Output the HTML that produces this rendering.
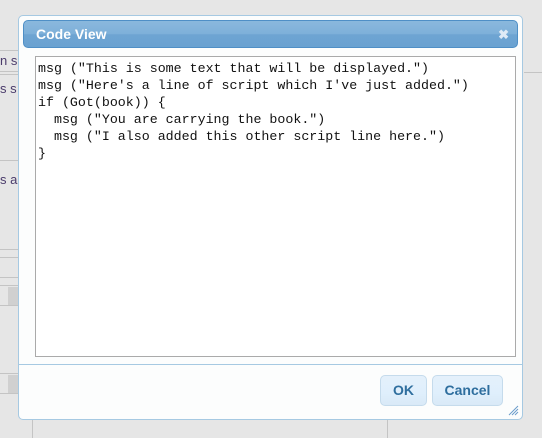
<!DOCTYPE html>
<html><head><meta charset="utf-8"><style>
html,body{margin:0;padding:0;width:542px;height:438px;overflow:hidden;background:#e6e6e6;font-family:"Liberation Sans",sans-serif;position:relative}
.l{position:absolute;background:#c4c4c4}
.t{position:absolute;font-size:13px;color:#4a3b6b;left:0}
#dlg{position:absolute;left:18px;top:15px;width:505px;height:405px;background:#fcfdfd;border:1px solid #a6c9e2;border-radius:5px;box-sizing:border-box}
#tb{position:absolute;left:4px;top:4px;width:495px;height:28px;border-radius:5px;border:1px solid #4f8fc6;box-sizing:border-box;background:linear-gradient(#8ab8dd,#7eb0d9 50%,#6ea4d2 52%,#6aa2d1)}
#tb span{position:absolute;left:12px;top:5px;color:#fff;font-weight:bold;font-size:14px}
#x{position:absolute;right:8px;top:6px;color:#dfeaf6;font-weight:bold;font-size:13px}
#ta{position:absolute;left:16px;top:40px;width:481px;height:301px;border:1px solid #aaa;background:#fff;box-sizing:border-box;padding:3px 2px;font-family:"Liberation Mono",monospace;font-size:13.3px;line-height:17px;white-space:pre;color:#111}
#sep{position:absolute;left:0;right:0;top:348px;height:1px;background:#a6c9e2}
.b{position:absolute;top:359px;height:31px;border:1px solid #c5dbec;border-radius:5px;box-sizing:border-box;background:linear-gradient(#e4f0fb,#dfeffc 60%,#d9e9f7);color:#2e6e9e;font-weight:bold;font-size:14px;text-align:center;line-height:29px}
</style></head><body>
<div class="l" style="left:0;top:50px;width:18px;height:1px"></div>
<div class="t" style="top:53px">n s</div>
<div class="l" style="left:0;top:71px;width:18px;height:1px"></div>
<div class="l" style="left:0;top:74px;width:18px;height:1px"></div>
<div class="t" style="top:81px">s s</div>
<div class="l" style="left:0;top:160px;width:18px;height:1px"></div>
<div class="t" style="top:172px">s a</div>
<div class="l" style="left:0;top:249px;width:18px;height:1px"></div>
<div class="l" style="left:0;top:257px;width:18px;height:1px"></div>
<div class="l" style="left:0;top:277px;width:18px;height:1px"></div>
<div class="l" style="left:0;top:285px;width:18px;height:1px"></div>
<div class="l" style="left:0;top:305px;width:18px;height:1px"></div>
<div class="l" style="left:0;top:373px;width:18px;height:1px"></div>
<div class="l" style="left:0;top:393px;width:18px;height:1px"></div>
<div class="l" style="left:8px;top:375px;width:10px;height:18px;background:#d0d0d0"></div>
<div class="l" style="left:8px;top:287px;width:10px;height:18px;background:#d0d0d0"></div>
<div class="l" style="left:32px;top:420px;width:1px;height:18px"></div>
<div class="l" style="left:387px;top:420px;width:1px;height:18px"></div>
<div class="l" style="left:524px;top:72px;width:18px;height:1px"></div>
<div id="dlg">
<div id="tb"><span>Code View</span><div id="x">✖</div></div>
<div id="ta">msg ("This is some text that will be displayed.")
msg ("Here's a line of script which I've just added.")
if (Got(book)) {
  msg ("You are carrying the book.")
  msg ("I also added this other script line here.")
}</div>
<div id="sep"></div>
<div class="b" style="left:361px;width:47px">OK</div>
<div class="b" style="left:413px;width:71px">Cancel</div>
<svg style="position:absolute;right:3px;bottom:3px" width="11" height="11"><path d="M10 1L1 10M10 4L4 10M10 7L7 10" stroke="#6b9ccb" stroke-width="1"/></svg>
</div>
</body></html>
